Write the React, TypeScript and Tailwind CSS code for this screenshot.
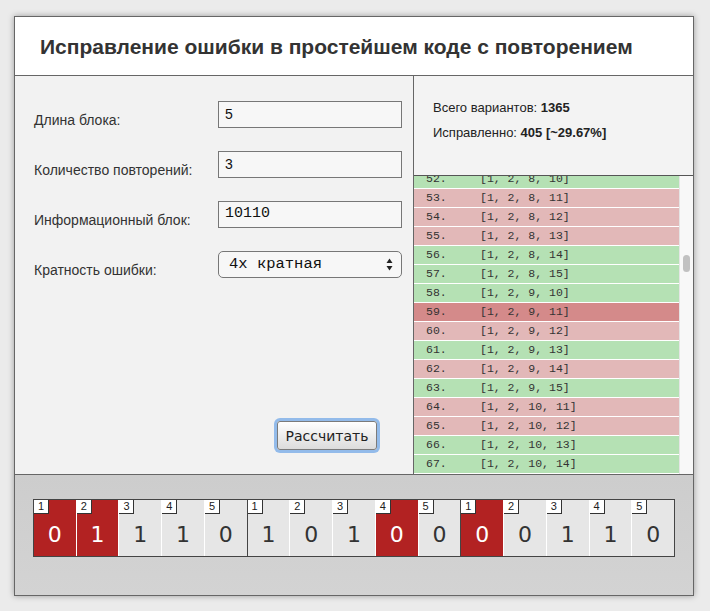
import React from "react";

const rows: { n: number; v: string; c: "g" | "r" | "h" }[] = [
  { n: 52, v: "[1, 2, 8, 10]", c: "g" },
  { n: 53, v: "[1, 2, 8, 11]", c: "r" },
  { n: 54, v: "[1, 2, 8, 12]", c: "r" },
  { n: 55, v: "[1, 2, 8, 13]", c: "r" },
  { n: 56, v: "[1, 2, 8, 14]", c: "g" },
  { n: 57, v: "[1, 2, 8, 15]", c: "g" },
  { n: 58, v: "[1, 2, 9, 10]", c: "g" },
  { n: 59, v: "[1, 2, 9, 11]", c: "h" },
  { n: 60, v: "[1, 2, 9, 12]", c: "r" },
  { n: 61, v: "[1, 2, 9, 13]", c: "g" },
  { n: 62, v: "[1, 2, 9, 14]", c: "r" },
  { n: 63, v: "[1, 2, 9, 15]", c: "g" },
  { n: 64, v: "[1, 2, 10, 11]", c: "r" },
  { n: 65, v: "[1, 2, 10, 12]", c: "r" },
  { n: 66, v: "[1, 2, 10, 13]", c: "g" },
  { n: 67, v: "[1, 2, 10, 14]", c: "g" },
];

const groups: { v: string; e: boolean }[][] = [
  [
    { v: "0", e: true },
    { v: "1", e: true },
    { v: "1", e: false },
    { v: "1", e: false },
    { v: "0", e: false },
  ],
  [
    { v: "1", e: false },
    { v: "0", e: false },
    { v: "1", e: false },
    { v: "0", e: true },
    { v: "0", e: false },
  ],
  [
    { v: "0", e: true },
    { v: "0", e: false },
    { v: "1", e: false },
    { v: "1", e: false },
    { v: "0", e: false },
  ],
];

const sans = { fontFamily: '"Liberation Sans", Arial, sans-serif' };
const mono = { fontFamily: '"Liberation Mono", "DejaVu Sans Mono", monospace' };

function Label({ children }: { children: React.ReactNode }) {
  return (
    <div className="w-[184px] mt-[11px] text-[14px] leading-[16px] text-[#333]">{children}</div>
  );
}

export default function App() {
  return (
    <div className="min-h-[611px] w-[710px] bg-[#ebebeb] pt-[16px] pl-[14px]" style={sans}>
      <div className="w-[680px] h-[580px] border border-[#666] bg-[#f2f2f2] shadow-[0_0_6px_rgba(0,0,0,0.35)] flex flex-col">
        {/* header */}
        <div className="h-[59px] shrink-0 bg-white border-b border-[#666] flex items-center pl-[25px]">
          <h1 className="text-[21px] font-bold text-[#333] leading-none pt-[1px]">
            Исправление ошибки в простейшем коде с повторением
          </h1>
        </div>

        {/* middle */}
        <div className="h-[399px] shrink-0 flex border-b border-[#666]">
          {/* left */}
          <div className="w-[399px] shrink-0 border-r border-[#666] flex flex-col pl-[19px] pt-[25px]">
            <div className="flex flex-col gap-[23px]">
              <div className="flex">
                <Label>Длина блока:</Label>
                <div className="w-[184px] h-[27px] border border-[#777] bg-[#f7f7f7] pl-[6px] flex items-center text-[14px] text-[#111]">
                  5
                </div>
              </div>
              <div className="flex">
                <Label>Количество повторений:</Label>
                <div className="w-[184px] h-[27px] border border-[#777] bg-[#f7f7f7] pl-[6px] flex items-center text-[14px] text-[#111]">
                  3
                </div>
              </div>
              <div className="flex">
                <Label>Информационный блок:</Label>
                <div
                  className="w-[184px] h-[27px] border border-[#777] bg-[#f7f7f7] pl-[6px] flex items-center text-[15px] text-[#111]"
                  style={mono}
                >
                  10110
                </div>
              </div>
              <div className="flex">
                <Label>Кратность ошибки:</Label>
                <div className="w-[184px] h-[27px] border border-[#777] rounded-[5px] bg-[#f7f7f7] pl-[10px] pr-[8px] flex items-center justify-between text-[15.5px] text-[#111]">
                  <span style={mono}>4x кратная</span>
                  <svg width="7" height="13" viewBox="0 0 7 13">
                    <path d="M3.5 0.5 L6.5 5 L0.5 5 Z" fill="#222" />
                    <path d="M3.5 12.5 L6.5 8 L0.5 8 Z" fill="#222" />
                  </svg>
                </div>
              </div>
            </div>
            <div className="flex-1" />
            <div className="flex justify-end pr-[36px] pb-[24px]">
              <button
                className="w-[100px] h-[29px] border border-[#7b7b7b] rounded-[3px] bg-gradient-to-b from-[#ffffff] to-[#dcdcdc] text-[#222] shadow-[0_0_0_3px_#93bbea] leading-none"
                style={{ fontFamily: '"DejaVu Sans", "Open Sans", sans-serif', fontSize: "14px" }}
              >
                Рассчитать
              </button>
            </div>
          </div>

          {/* right */}
          <div className="flex-1 flex flex-col">
            <div className="h-[100px] shrink-0 border-b border-[#555] bg-[#f3f3f3] pl-[19px] pt-[19px] text-[13px] text-[#222] leading-[25px]">
              <div>
                Всего вариантов: <b>1365</b>
              </div>
              <div>
                Исправленно: <b>405 [~29.67%]</b>
              </div>
            </div>
            <div className="flex-1 flex overflow-hidden">
              <div className="flex-1 overflow-hidden">
                <div className="-mt-[6px]">
                  {rows.map((r) => (
                    <div
                      key={r.n}
                      className={
                        "h-[19px] border-b border-white flex items-center pl-[12px] text-[11.5px] text-[#333] " +
                        (r.c === "g" ? "bg-[#b5e1b4]" : r.c === "r" ? "bg-[#e2b8b8]" : "bg-[#d48a8a]")
                      }
                      style={mono}
                    >
                      <span className="w-[54px]">{r.n}.</span>
                      <span>{r.v}</span>
                    </div>
                  ))}
                </div>
              </div>
              <div className="w-[14px] shrink-0 bg-[#f8f8f8] border-l border-[#e5e5e5] pt-[79px] pl-[3px]">
                <div className="w-[7px] h-[17px] rounded-full bg-[#c1c1c1]" />
              </div>
            </div>
          </div>
        </div>

        {/* bottom */}
        <div className="flex-1 bg-gradient-to-b from-[#cdcdcd] to-[#d3d3d3] pt-[24px] pl-[18px]">
          <div className="w-[642px] h-[58px] border border-[#444] flex">
            {groups.map((g, gi) => (
              <div key={gi} className={"flex-1 flex " + (gi > 0 ? "border-l border-[#444]" : "")}>
                {g.map((c, ci) => (
                  <div
                    key={ci}
                    className={
                      "relative flex-1 flex items-center justify-center pt-[12px] " +
                      (ci > 0 ? "border-l border-white " : "") +
                      (c.e ? "bg-[#b22222] text-white" : "bg-[#e6e6e6] text-[#333]")
                    }
                  >
                    <div
                      className="absolute left-0 top-0 w-[15px] h-[14px] bg-white border-r border-b border-[#333] flex items-center justify-center text-[11px] text-[#222] leading-none"
                      style={sans}
                    >
                      {ci + 1}
                    </div>
                    <span className="text-[22px]" style={{ fontFamily: '"DejaVu Sans", Verdana, sans-serif' }}>
                      {c.v}
                    </span>
                  </div>
                ))}
              </div>
            ))}
          </div>
        </div>
      </div>
    </div>
  );
}
